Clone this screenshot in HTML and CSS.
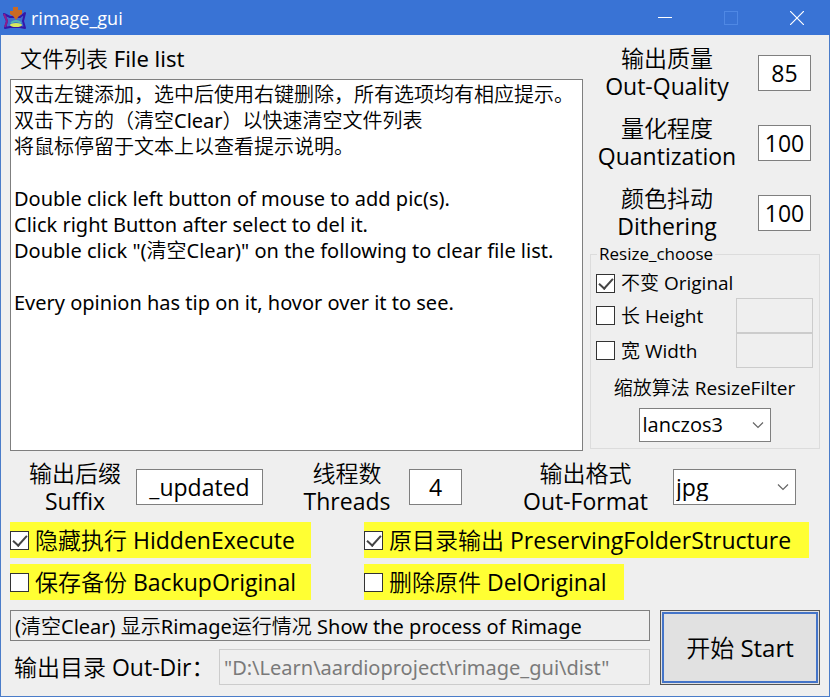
FILE: index.html
```html
<!DOCTYPE html>
<html lang="zh-CN">
<head>
  <meta charset="UTF-8" />
  <meta name="viewport" content="width=device-width, initial-scale=1" />
  <title>rimage_gui</title>
  <link rel="stylesheet" href="styles.css">
</head>
<body>

<div class="window">
  <header class="titlebar">
    <svg class="app-icon" viewBox="0 0 24 24" width="24" height="24" aria-hidden="true">
      <path d="M1 8 L7 11 L17 11 L22 7 L20 15 L22 22 L17 21 L7 21 L2 22 L4 15 Z" fill="#3f6fce" stroke="#3516a8" stroke-width="2" stroke-linejoin="round"/>
      <path d="M1 8 L4 15 L2 21" fill="none" stroke="#8d1d8c" stroke-width="2"/>
      <ellipse cx="13" cy="19" rx="6" ry="2" fill="#d8e860"/>
      <path d="M8 17 Q13 13 18 17" fill="none" stroke="#52b5b0" stroke-width="2"/>
      <path d="M10 1 H15 V4 H19 V8 L16 10 L13 14 L10 10 L7 8 V5 H10 Z" fill="#c96a24"/>
    </svg>
    <span class="title">rimage_gui</span>
    <div class="win-buttons">
      <button type="button" aria-label="Minimize">
        <svg viewBox="0 0 14 14" width="14" height="14"><path d="M0 6.5H14" stroke="#fff"/></svg>
      </button>
      <button type="button" aria-label="Maximize" disabled>
        <svg viewBox="0 0 14 14" width="14" height="14"><rect x="0.5" y="0.5" width="13" height="13" fill="none" stroke="#4f88e4"/></svg>
      </button>
      <button type="button" aria-label="Close">
        <svg viewBox="0 0 14 14" width="14" height="14"><path d="M0 0L14 14M14 0L0 14" stroke="#fff" stroke-width="1.2"/></svg>
      </button>
    </div>
  </header>

  <main class="content">
    <div class="top">
      <section class="files">
        <label class="files-label" for="files">文件列表 File list</label>
        <textarea id="files" class="file-list" readonly>双击左键添加，选中后使用右键删除，所有选项均有相应提示。
双击下方的（清空Clear）以快速清空文件列表
将鼠标停留于文本上以查看提示说明。

Double click left button of mouse to add pic(s).
Click right Button after select to del it.
Double click "(清空Clear)" on the following to clear file list.

Every opinion has tip on it, hovor over it to see.</textarea>
      </section>

      <section class="options">
        <div class="option">
          <label for="quality">输出质量<br>Out-Quality</label>
          <input id="quality" class="field number" type="text" value="85">
        </div>
        <div class="option">
          <label for="quant">量化程度<br>Quantization</label>
          <input id="quant" class="field number" type="text" value="100">
        </div>
        <div class="option">
          <label for="dither">颜色抖动<br>Dithering</label>
          <input id="dither" class="field number" type="text" value="100">
        </div>

        <fieldset class="resize">
          <legend>Resize_choose</legend>
          <div class="resize-row first">
            <label class="check"><input type="checkbox" checked>不变 Original</label>
          </div>
          <div class="resize-row">
            <label class="check"><input type="checkbox">长 Height</label>
            <input class="field size" type="text" aria-label="Height" disabled>
          </div>
          <div class="resize-row">
            <label class="check"><input type="checkbox">宽 Width</label>
            <input class="field size" type="text" aria-label="Width" disabled>
          </div>
          <label class="filter-label" for="filter">缩放算法 ResizeFilter</label>
          <div class="select filter">
            <select id="filter"><option>lanczos3</option></select>
            <svg viewBox="0 0 12 8" width="12" height="8" aria-hidden="true"><path d="M1 1.5L6 6.5L11 1.5" fill="none" stroke="#666" stroke-width="1.2"/></svg>
          </div>
        </fieldset>
      </section>
    </div>

    <div class="output">
      <label class="suffix-label" for="suffix">输出后缀<br>Suffix</label>
      <input id="suffix" class="field suffix" type="text" value="_updated">
      <label class="threads-label" for="threads">线程数<br>Threads</label>
      <input id="threads" class="field number" type="text" value="4">
      <label class="format-label" for="format">输出格式<br>Out-Format</label>
      <div class="select format">
        <select id="format"><option>jpg</option></select>
        <svg viewBox="0 0 12 8" width="12" height="8" aria-hidden="true"><path d="M1 1.5L6 6.5L11 1.5" fill="none" stroke="#666" stroke-width="1.2"/></svg>
      </div>
    </div>

    <div class="flags">
      <label class="check flag wide"><input type="checkbox" checked>隐藏执行 HiddenExecute</label>
      <label class="check flag"><input type="checkbox" checked>原目录输出 PreservingFolderStructure</label>
      <label class="check flag wide"><input type="checkbox">保存备份 BackupOriginal</label>
      <label class="check flag"><input type="checkbox">删除原件 DelOriginal</label>
    </div>

    <div class="bottom">
      <div class="status">
        <input class="field log" type="text" aria-label="Process" readonly value="(清空Clear) 显示Rimage运行情况 Show the process of Rimage">
        <div class="dir">
          <label for="outdir">输出目录 Out-Dir：</label>
          <input id="outdir" class="field" type="text" disabled value='"D:\Learn\aardioproject\rimage_gui\dist"'>
        </div>
      </div>
      <button type="button" class="start">开始 Start</button>
    </div>
  </main>
</div>

</body>
</html>
```
FILE: styles.css
```css
* {
  box-sizing: border-box;
}

body {
  margin: 0;
  background: #efefef;
  color: #000;
  font-family: "Open Sans", "Noto Sans CJK SC DemiLight", "Noto Sans CJK SC", sans-serif;
  font-size: 23px;
  line-height: 28px;
}

input, select, textarea, button {
  font: inherit;
  color: inherit;
  margin: 0;
  border-radius: 0;
}

.window {
  display: flex;
  flex-direction: column;
  min-height: 100vh;
  border: 1px solid #4a7cc9;
  border-top: 0;
}

/* title bar */
.titlebar {
  display: flex;
  align-items: center;
  height: 35px;
  margin: 0 -1px;
  padding-left: 3px;
  background: #3973d5;
  color: #fff;
}

.title {
  margin-left: 4px;
  font-size: 18px;
}

.win-buttons {
  display: flex;
  margin-left: auto;
}

.win-buttons button {
  display: flex;
  align-items: center;
  justify-content: center;
  width: 66px;
  height: 35px;
  padding: 0;
  border: 0;
  background: none;
}

.content {
  flex: 1;
  display: flex;
  flex-direction: column;
  padding: 9px 9px 11px;
}

.field {
  height: 36px;
  padding: 0 4px;
  border: 1px solid #7f7f7f;
  background: #fff;
}

.field:disabled {
  border-color: #ccc;
  background: #efefef;
  color: #7a7a7a;
}

.number {
  width: 53px;
  padding: 0;
  text-align: center;
}

/* file list + options */
.top {
  flex: 1;
  display: flex;
  gap: 7px;
}

.files {
  flex: 1;
  display: flex;
  flex-direction: column;
}

.files-label {
  margin-bottom: 7px;
  padding-left: 10px;
  font-family: "Noto Sans", "Noto Sans CJK SC DemiLight", "Noto Sans CJK SC", sans-serif;
  font-size: 22px;
}

.file-list {
  flex: 1;
  padding: 2px 3px;
  border: 1px solid #7f7f7f;
  outline: 0;
  background: #fff;
  font-family: "Noto Sans", "Noto Sans CJK SC DemiLight", "Noto Sans CJK SC", sans-serif;
  font-size: 20px;
  line-height: 26px;
  resize: none;
}

.options {
  display: flex;
  flex-direction: column;
  width: 230px;
}

.option {
  display: flex;
  align-items: center;
  margin-bottom: 12px;
  padding-right: 9px;
}

.option label {
  flex: 1;
  padding: 0 14px 2px 0;
  text-align: center;
}

.resize {
  min-width: 0;
  margin: -10px 0 0;
  padding: 4px 6px 6px 5px;
  border: 1px solid #dcdcdc;
  font-size: 19px;
}

.resize legend {
  margin-left: 1px;
  padding: 0 2px;
  font-size: 17px;
  line-height: 20px;
}

.resize-row {
  display: flex;
  align-items: center;
  justify-content: space-between;
  height: 35px;
}

.resize-row.first {
  height: 30px;
}

.size {
  width: 77px;
  height: 35px;
}

.check {
  display: flex;
  align-items: center;
  gap: 6px;
}

.check input {
  appearance: none;
  display: flex;
  justify-content: center;
  width: 19px;
  height: 19px;
  border: 1px solid #333;
  background: #fff;
}

.check input:checked::before {
  content: "";
  width: 6px;
  height: 12px;
  border: solid #444;
  border-width: 0 2px 2px 0;
  transform: rotate(42deg);
}

.filter-label {
  display: block;
  margin: 6px 0;
  text-align: center;
}

.select {
  position: relative;
}

.select select {
  appearance: none;
  width: 100%;
  height: 100%;
  padding: 0 3px;
  border: 1px solid #7f7f7f;
  background: #fff;
}

.select svg {
  position: absolute;
  top: calc(50% - 4px);
  right: 7px;
  pointer-events: none;
}

.filter {
  width: 132px;
  height: 34px;
  margin: 0 auto;
  font-size: 20px;
}

/* suffix, threads, format */
.output {
  display: flex;
  align-items: center;
  margin: 8px 24px 7px 0;
  text-align: center;
}

.suffix-label {
  width: 126px;
  padding-left: 4px;
}

.suffix {
  width: 127px;
  text-align: center;
}

.threads-label {
  width: 146px;
  padding-left: 22px;
}

.format-label {
  margin-left: auto;
  margin-right: 25px;
}

.format {
  width: 123px;
  height: 36px;
}

.format select {
  padding: 0 2px;
}

.flags {
  display: grid;
  grid-template-columns: 301px auto;
  gap: 6px 53px;
  justify-content: start;
  justify-items: start;
}

.flag {
  height: 36px;
  padding-right: 18px;
  background: #ffff33;
}

.flag.wide {
  width: 100%;
  padding-right: 0;
}

/* log, output folder, start */
.bottom {
  display: flex;
  gap: 10px;
  margin-top: 10px;
}

.status {
  flex: 1;
  display: flex;
  flex-direction: column;
  gap: 8px;
}

.log {
  width: 100%;
  height: 31px;
  background: #efefef;
  font-family: "Noto Sans", "Noto Sans CJK SC DemiLight", "Noto Sans CJK SC", sans-serif;
  font-size: 20px;
}

.dir {
  display: flex;
  align-items: center;
}

.dir label {
  width: 209px;
  padding-left: 4px;
  white-space: nowrap;
}

.dir input {
  flex: 1;
  min-width: 0;
  font-family: "Noto Sans", "Noto Sans CJK SC DemiLight", "Noto Sans CJK SC", sans-serif;
  font-size: 20px;
}

.start {
  width: 160px;
  border: 1px solid #555;
  outline: 2px solid #4474c8;
  outline-offset: -4px;
  background: #e1e1e1;
  font-size: 24px;
}
```
